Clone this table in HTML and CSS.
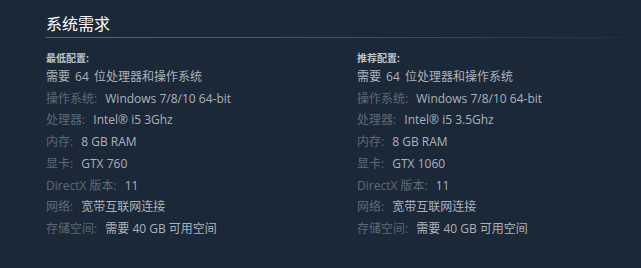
FILE: index.html
```html
<!DOCTYPE html>
<html lang="zh">
<head>
<meta charset="utf-8">
<link rel="stylesheet" href="styles.css">
</head>
<body>
<div class="sysreq">
  <h2 class="title">系统需求</h2>
  <div class="cols">
    <div class="col">
      <div class="col-head">最低配置:</div>
      <ul class="reqs">
        <li class="bits">需要 64 位处理器和操作系统</li>
        <li><span class="lbl">操作系统:</span> Windows 7/8/10 64-bit</li>
        <li><span class="lbl">处理器:</span> Intel® i5 3Ghz</li>
        <li><span class="lbl">内存:</span> 8 GB RAM</li>
        <li><span class="lbl">显卡:</span> GTX 760</li>
        <li><span class="lbl">DirectX 版本:</span> 11</li>
        <li><span class="lbl">网络:</span> 宽带互联网连接</li>
        <li><span class="lbl">存储空间:</span> 需要 40 GB 可用空间</li>
      </ul>
    </div>
    <div class="col">
      <div class="col-head">推荐配置:</div>
      <ul class="reqs">
        <li class="bits">需要 64 位处理器和操作系统</li>
        <li><span class="lbl">操作系统:</span> Windows 7/8/10 64-bit</li>
        <li><span class="lbl">处理器:</span> Intel® i5 3.5Ghz</li>
        <li><span class="lbl">内存:</span> 8 GB RAM</li>
        <li><span class="lbl">显卡:</span> GTX 1060</li>
        <li><span class="lbl">DirectX 版本:</span> 11</li>
        <li><span class="lbl">网络:</span> 宽带互联网连接</li>
        <li><span class="lbl">存储空间:</span> 需要 40 GB 可用空间</li>
      </ul>
    </div>
  </div>
</div>
</body>
</html>
```

FILE: styles.css
```css
html, body {
  margin: 0;
  padding: 0;
  background: #1b2838;
}
body {
  font-family: "Open Sans", "Noto Sans CJK SC", sans-serif;
  color: #acb2b8;
}
.sysreq {
  padding: 14px 0 0 46px;
}
.title {
  margin: 0;
  width: 580px;
  font-size: 16px;
  line-height: 20px;
  font-weight: normal;
  color: #ffffff;
  padding-bottom: 3px;
  border-bottom: 1px solid transparent;
  border-image: linear-gradient(to right, #3f6d8c 0%, #2f536d 60%, rgba(47, 83, 109, 0.15) 100%) 1;
}
.cols {
  display: grid;
  grid-template-columns: 311px 280px;
  margin-top: 13px;
}
.col-head {
  font-size: 10px;
  line-height: 14px;
  font-weight: bold;
  color: #bcc6cf;
  margin-bottom: 1px;
}
.reqs {
  list-style: none;
  margin: 0;
  padding: 0;
  font-size: 12px;
  line-height: 21.7px;
}
.reqs li {
  white-space: nowrap;
}
.reqs .bits {
  word-spacing: 2px;
}
.lbl {
  color: #5d6a76;
  margin-right: 5px;
}
```
